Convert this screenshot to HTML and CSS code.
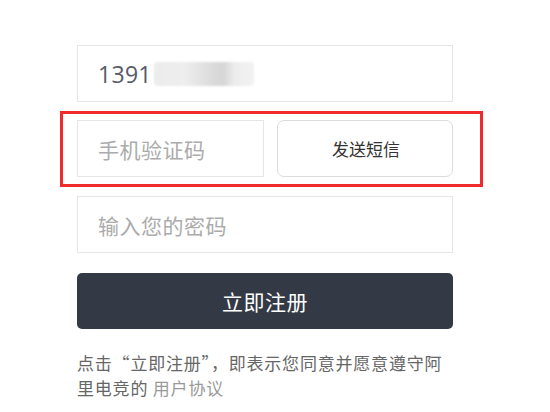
FILE: index.html
```html
<!DOCTYPE html>
<html lang="zh-CN">
<head>
<meta charset="utf-8">
<title>注册</title>
<link rel="stylesheet" href="styles.css">
</head>
<body>
<div class="form">
  <div class="field phone">
    <span class="num">1391</span><span class="blur"></span>
  </div>
  <div class="mark">
    <div class="field code"><span class="ph">手机验证码</span></div>
    <div class="send">发送短信</div>
  </div>
  <div class="field pwd"><span class="ph">输入您的密码</span></div>
  <div class="submit">立即注册</div>
  <div class="agree">
    <span class="line">点击“立即注册”，即表示您同意并愿意遵守阿</span>
    <span class="line">里电竞的 <span class="link">用户协议</span></span>
  </div>
</div>
</body>
</html>
```

FILE: styles.css
```css
html, body {
  margin: 0;
  padding: 0;
  background: #fff;
}
body {
  font-family: "Noto Sans CJK SC", "Noto Sans", sans-serif;
}
.form {
  width: 376px;
  margin-left: 77px;
  padding-top: 45px;
  display: flex;
  flex-direction: column;
}
.field {
  box-sizing: border-box;
  height: 57px;
  border: 1px solid #e6e6e6;
  background: #fff;
  display: flex;
  align-items: center;
  padding-left: 20px;
}
.num {
  font-family: "Open Sans", "Noto Sans", sans-serif;
  font-size: 23px;
  color: #555b66;
  letter-spacing: 0.3px;
}
.blur {
  display: inline-block;
  width: 100px;
  height: 24px;
  margin-left: 2px;
  border-radius: 4px;
  background: linear-gradient(90deg, #ececec 0%, #eeeeee 30%, #e4e4e4 45%, #dadada 60%, #d6d6d6 70%, #ececec 80%, #f2f2f2 100%);
  filter: blur(1px);
}
.ph {
  font-size: 21px;
  color: #ababab;
  letter-spacing: 0.5px;
}
.mark {
  margin: 9px -30px 0 -17px;
  border: 3px solid #ef2b2b;
  padding: 6px 27px 7px 14px;
  display: flex;
  gap: 13px;
}
.code {
  width: 187px;
}
.send {
  box-sizing: border-box;
  flex: 1;
  height: 57px;
  border: 1px solid #dcdcdc;
  border-radius: 7px;
  background: #fff;
  display: flex;
  align-items: center;
  justify-content: center;
  font-size: 17px;
  color: #333;
  padding-left: 2px;
}
.pwd {
  margin-top: 9px;
}
.submit {
  margin-top: 20px;
  height: 56px;
  border-radius: 5px;
  background: #343a45;
  color: #fff;
  font-size: 21px;
  display: flex;
  align-items: center;
  justify-content: center;
  letter-spacing: 0.5px;
}
.agree {
  margin-top: 21px;
  display: flex;
  flex-direction: column;
  font-size: 17px;
  line-height: 25px;
  color: #666;
  letter-spacing: 0.8px;
}
.line {
  white-space: nowrap;
}
.link {
  color: #999;
}
```
